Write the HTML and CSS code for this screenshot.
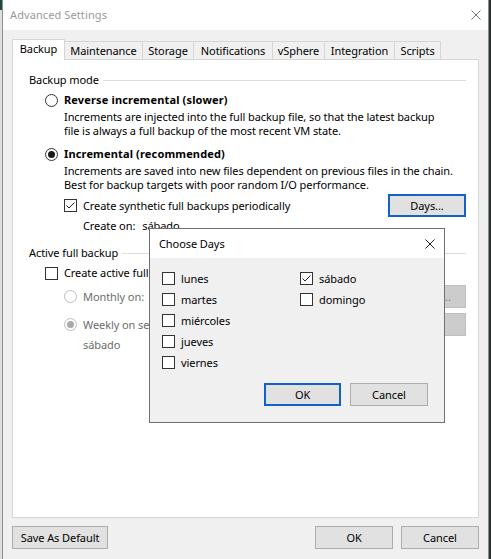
FILE: index.html
```html
<!DOCTYPE html>
<html>
<head>
<meta charset="utf-8">
<link rel="stylesheet" href="styles.css">
</head>
<body>
<div class="window">
  <div class="titlebar">
    <span class="title">Advanced Settings</span>
    <svg class="close inactive" width="10" height="10" viewBox="0 0 10 10"><path d="M0.5 0.5L9.5 9.5M9.5 0.5L0.5 9.5"/></svg>
  </div>
  <div class="client">
    <div class="tabs">
      <div class="tab active">Backup</div>
      <div class="tab">Maintenance</div>
      <div class="tab">Storage</div>
      <div class="tab">Notifications</div>
      <div class="tab">vSphere</div>
      <div class="tab">Integration</div>
      <div class="tab">Scripts</div>
    </div>
    <div class="panel">
      <section class="group">
        <div class="group-head"><span>Backup mode</span><span class="rule"></span></div>
        <div class="opt first">
          <svg class="radio" width="13" height="13" viewBox="0 0 13 13"><circle cx="6.5" cy="6.5" r="6" class="ring"/></svg>
          <b>Reverse incremental (slower)</b>
        </div>
        <p class="desc">Increments are injected into the full backup file, so that the latest backup<br>file is always a full backup of the most recent VM state.</p>
        <div class="opt second">
          <svg class="radio" width="13" height="13" viewBox="0 0 13 13"><circle cx="6.5" cy="6.5" r="6" class="ring"/><circle cx="6.5" cy="6.5" r="3.5" class="dot"/></svg>
          <b>Incremental (recommended)</b>
        </div>
        <p class="desc">Increments are saved into new files dependent on previous files in the chain.<br>Best for backup targets with poor random I/O performance.</p>
        <div class="synth-row">
          <div class="check">
            <svg class="box" width="13" height="13" viewBox="0 0 13 13"><rect x="0.5" y="0.5" width="12" height="12"/><polyline points="2.5,6.5 5,9 10.5,3.5"/></svg>
            <span>Create synthetic full backups periodically</span>
          </div>
          <button class="btn default">Days...</button>
        </div>
        <div class="create-on"><span>Create on:</span><span class="day">sábado</span></div>
      </section>
      <section class="group second-group">
        <div class="group-head"><span>Active full backup</span><span class="rule"></span></div>
        <div class="check active-check">
          <svg class="box" width="13" height="13" viewBox="0 0 13 13"><rect x="0.5" y="0.5" width="12" height="12"/></svg>
          <span>Create active full backups periodically</span>
        </div>
        <div class="sched-row">
          <div class="opt-inline disabled">
            <svg class="radio" width="13" height="13" viewBox="0 0 13 13"><circle cx="6.5" cy="6.5" r="6" class="ring"/></svg>
            <span>Monthly on:</span>
          </div>
          <button class="btn off">Months...</button>
        </div>
        <div class="sched-row">
          <div class="opt-inline disabled">
            <svg class="radio" width="13" height="13" viewBox="0 0 13 13"><circle cx="6.5" cy="6.5" r="6" class="ring"/><circle cx="6.5" cy="6.5" r="3.5" class="dot"/></svg>
            <span>Weekly on selected days:</span>
          </div>
          <button class="btn off">Days...</button>
        </div>
        <div class="weekly-day">sábado</div>
      </section>
    </div>
    <div class="footer">
      <button class="btn save">Save As Default</button>
      <span class="spacer"></span>
      <button class="btn wide">OK</button>
      <button class="btn wide">Cancel</button>
    </div>
  </div>
</div>

<div class="dialog">
  <div class="dlg-title">
    <span>Choose Days</span>
    <svg class="close" width="10" height="10" viewBox="0 0 10 10"><path d="M0.5 0.5L9.5 9.5M9.5 0.5L0.5 9.5"/></svg>
  </div>
  <div class="days">
    <div class="check"><svg class="box" width="13" height="13" viewBox="0 0 13 13"><rect x="0.5" y="0.5" width="12" height="12"/></svg><span>lunes</span></div>
    <div class="check"><svg class="box" width="13" height="13" viewBox="0 0 13 13"><rect x="0.5" y="0.5" width="12" height="12"/></svg><span>martes</span></div>
    <div class="check"><svg class="box" width="13" height="13" viewBox="0 0 13 13"><rect x="0.5" y="0.5" width="12" height="12"/></svg><span>miércoles</span></div>
    <div class="check"><svg class="box" width="13" height="13" viewBox="0 0 13 13"><rect x="0.5" y="0.5" width="12" height="12"/></svg><span>jueves</span></div>
    <div class="check"><svg class="box" width="13" height="13" viewBox="0 0 13 13"><rect x="0.5" y="0.5" width="12" height="12"/></svg><span>viernes</span></div>
    <div class="check"><svg class="box" width="13" height="13" viewBox="0 0 13 13"><rect x="0.5" y="0.5" width="12" height="12"/><polyline points="2.5,6.5 5,9 10.5,3.5"/></svg><span>sábado</span></div>
    <div class="check"><svg class="box" width="13" height="13" viewBox="0 0 13 13"><rect x="0.5" y="0.5" width="12" height="12"/></svg><span>domingo</span></div>
  </div>
  <div class="dlg-buttons">
    <button class="btn default dlg-ok">OK</button>
    <button class="btn dlg-cancel">Cancel</button>
  </div>
</div>
</body>
</html>
```

FILE: styles.css
```css
* { box-sizing: border-box; }

html, body { margin: 0; }

body {
  width: 491px;
  height: 559px;
  overflow: hidden;
  position: relative;
  font-family: "Noto Sans", "Open Sans", sans-serif;
  font-size: 11px;
  letter-spacing: -0.08px;
  line-height: 14px;
  color: #000;
  background:
    linear-gradient(#1f4a37 0 10px, transparent 10px) left top / 2px 100% no-repeat,
    linear-gradient(to right, #dedede 0 2px, #2c322f 2px);
}

p { margin: 0; }

b { letter-spacing: 0.15px; }

.window {
  margin-left: 2px;
  width: 487px;
  height: 559px;
  border-left: 1px solid #8f8f8f;
  border-right: 1px solid #8f8f8f;
  background: #f0f0f0;
  display: flex;
  flex-direction: column;
}

.titlebar {
  height: 30px;
  flex: none;
  background: #fff;
  display: flex;
  align-items: center;
  justify-content: space-between;
  padding: 0 7px 0 7px;
}

.title { color: #9a9a9a; letter-spacing: 0.1px; }

.close path { stroke: #1a1a1a; stroke-width: 1; fill: none; }
.close.inactive path { stroke: #777; }

.client {
  flex: 1;
  padding: 9px 9px 0;
  display: flex;
  flex-direction: column;
}

.tabs {
  display: flex;
  align-items: flex-end;
  height: 20px;
  position: relative;
  z-index: 1;
}

.tab {
  height: 18px;
  border: 1px solid #d6d6d6;
  border-bottom: none;
  border-right: none;
  background: #f0f0f0;
  text-align: center;
  padding-top: 2px;
  white-space: nowrap;
}

.tab.active {
  height: 21px;
  margin-bottom: -1px;
  background: #fff;
  border-right: 1px solid #d6d6d6;
}

.tab.active + .tab { border-left: none; }
.tab:last-child { border-right: 1px solid #d6d6d6; }

.tab:nth-child(1) { width: 53px; }
.tab:nth-child(2) { width: 77px; }
.tab:nth-child(3) { width: 51px; }
.tab:nth-child(4) { width: 79px; }
.tab:nth-child(5) { width: 52px; }
.tab:nth-child(6) { width: 70px; }
.tab:nth-child(7) { width: 47px; }

.panel {
  height: 459px;
  flex: none;
  background: #fff;
  border: 1px solid #d6d6d6;
  padding: 13px 12px 0 16px;
}

.group-head {
  display: flex;
  align-items: center;
  gap: 4px;
  height: 14px;
}

.group-head .rule {
  flex: 1;
  height: 1px;
  background: #dcdcdc;
}

.radio .ring { fill: #fff; stroke: #333; stroke-width: 1; }
.radio .dot { fill: #1a1a1a; }
.disabled .radio .ring { stroke: #bcbcbc; }
.disabled .radio .dot { fill: #a9a9a9; }

.box rect { fill: #fff; stroke: #333; stroke-width: 1; }
.box polyline { fill: none; stroke: #222; stroke-width: 1; }

.opt {
  display: flex;
  align-items: center;
  gap: 6px;
  margin-left: 16px;
  height: 14px;
}

.opt.first { margin-top: 6px; }
.opt.second { margin-top: 9px; }

.desc {
  margin: 3px 0 0 35px;
  white-space: nowrap;
}

.check {
  display: flex;
  align-items: center;
  gap: 6px;
  white-space: nowrap;
}

.synth-row {
  display: flex;
  align-items: center;
  justify-content: space-between;
  margin: 2px 0 0 35px;
  height: 23px;
}

.create-on {
  margin: 2px 0 0 54px;
  display: flex;
  gap: 7px;
}

.second-group { margin-top: 13px; }

.active-check {
  margin: 6px 0 0 16px;
  height: 14px;
}

.sched-row {
  display: flex;
  align-items: center;
  justify-content: space-between;
  margin: 5px 0 0 35px;
  height: 23px;
}

.opt-inline {
  display: flex;
  align-items: center;
  gap: 6px;
  white-space: nowrap;
}

.disabled { color: #6d6d6d; }

.weekly-day {
  margin: 2px 0 0 54px;
  color: #6d6d6d;
}

.btn {
  height: 23px;
  width: 78px;
  border: 1px solid #adadad;
  background: #e1e1e1;
  font: inherit;
  letter-spacing: inherit;
  color: #000;
  padding: 0;
  margin: 0;
}

.btn.default { border: 2px solid #1161c8; }

.btn.off {
  background: #cccccc;
  border-color: #bfbfbf;
  color: #838383;
}

.footer {
  display: flex;
  margin-top: 8px;
  gap: 8px;
}

.btn.save { width: 96px; }
.spacer { flex: 1; }

.dialog {
  position: absolute;
  left: 149px;
  top: 228px;
  width: 296px;
  height: 195px;
  border: 1px solid #707070;
  background: #f0f0f0;
}

.dlg-title {
  height: 29px;
  background: #fff;
  display: flex;
  align-items: center;
  justify-content: space-between;
  padding: 0 9px;
}

.days {
  display: grid;
  grid-template-columns: 138px 1fr;
  grid-template-rows: repeat(5, 21px);
  grid-auto-flow: column;
  align-items: center;
  padding: 10px 0 0 12px;
}

.dlg-buttons {
  display: flex;
  justify-content: flex-end;
  gap: 9px;
  margin-top: 10px;
  padding-right: 16px;
}

.dlg-ok { width: 77px; }
```
